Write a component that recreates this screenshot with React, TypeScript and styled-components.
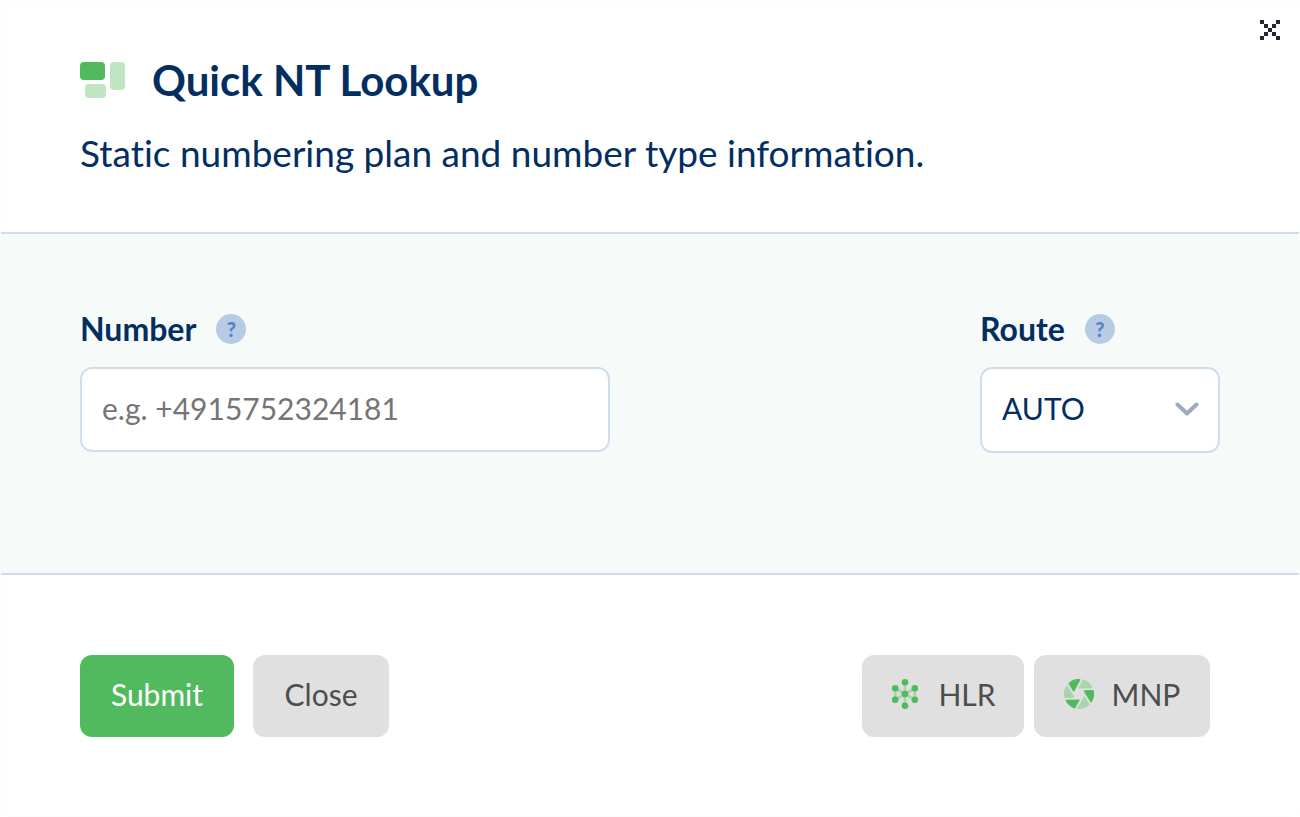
import React from "react";
import styled, { createGlobalStyle } from "styled-components";

const GlobalStyle = createGlobalStyle`
  *, *::before, *::after { box-sizing: border-box; }
  body {
    margin: 0;
    background: #ffffff;
    color: #032e61;
    font-family: Avenir, Lato, "Liberation Sans", sans-serif;
    font-variant-ligatures: none;
  }
  button, input, select { font: inherit; }
`;

const Dialog = styled.main`
  position: relative;
  display: flex;
  flex-direction: column;
  min-height: 100vh;
  background: #fff;
  border: 1px solid #fcfcfc;
  border-radius: 12px;
`;

const Dismiss = styled.button`
  position: absolute;
  top: 9px;
  right: 9px;
  display: flex;
  padding: 10px;
  border: 0;
  background: none;
  color: #222533;
  cursor: pointer;
`;

const Header = styled.header`
  padding: 54px 79px 54px;
`;

const TitleRow = styled.div`
  display: flex;
  align-items: center;
  gap: 26px;
`;

const Title = styled.h1`
  margin: 0;
  font-size: 42px;
  line-height: 50px;
  font-weight: 700;
`;

const Subtitle = styled.p`
  margin: 23px 0 0;
  font-size: 37px;
  line-height: 50px;
`;

const Fields = styled.section`
  display: grid;
  grid-template-columns: minmax(0, 530px) 240px;
  justify-content: space-between;
  align-items: start;
  gap: 20px;
  padding: 75px 79px 120px;
  background: #f6faf9;
  border: solid #cfdeef;
  border-width: 2px 0;
`;

const Field = styled.div`
  display: flex;
  flex-direction: column;
  gap: 18px;
`;

const LabelRow = styled.div`
  display: flex;
  align-items: center;
  gap: 20px;
  height: 40px;
`;

const Label = styled.label`
  font-size: 32px;
  line-height: 40px;
  font-weight: 700;
`;

const Help = styled.button`
  width: 30px;
  height: 30px;
  padding: 0;
  border: 0;
  border-radius: 50%;
  background: #b7cbe4;
  color: #5583c9;
  font-size: 20px;
  line-height: 30px;
  font-weight: 900;
  cursor: help;
`;

const TextBox = styled.input`
  width: 100%;
  height: 85px;
  padding: 0 20px 4px;
  border: 2px solid #cfdeef;
  border-radius: 12px;
  background: #fff;
  color: inherit;
  font-size: 30px;

  &::placeholder {
    color: #757575;
    opacity: 1;
  }
`;

const SelectFrame = styled.div`
  display: grid;
  grid-template-columns: 1fr 45px;
  align-items: center;

  svg {
    grid-area: 1 / 2;
    margin-bottom: 3px;
    pointer-events: none;
  }
`;

const Select = styled.select`
  grid-area: 1 / 1 / 2 / 3;
  height: 86px;
  padding: 0 50px 4px 20px;
  border: 2px solid #cfdeef;
  border-radius: 12px;
  background: #fff;
  color: inherit;
  font-size: 30px;
  appearance: none;
`;

const Footer = styled.footer`
  display: flex;
  flex-wrap: wrap;
  justify-content: space-between;
  gap: 20px;
  padding: 80px 89px 79px 79px;
`;

const ButtonGroup = styled.div<{ $gap: number }>`
  display: flex;
  gap: ${(p) => p.$gap}px;
`;

const Button = styled.button<{ $primary?: boolean; $width: number }>`
  display: flex;
  align-items: center;
  justify-content: center;
  gap: 18px;
  min-width: ${(p) => p.$width}px;
  height: 82px;
  padding: 0 20px 4px;
  border: 0;
  border-radius: 12px;
  background: ${(p) => (p.$primary ? "#52ba5e" : "#e0e0e0")};
  color: ${(p) => (p.$primary ? "#ffffff" : "#4d4d4d")};
  font-size: 30px;
  line-height: 40px;
  cursor: pointer;
`;

const BlocksIcon = () => (
  <svg width="46" height="36" viewBox="0 0 46 36" aria-hidden="true">
    <rect width="25" height="18" rx="4" fill="#52ba5e" />
    <rect x="30" width="15" height="28" rx="4" fill="#bfe5c1" />
    <rect x="5" y="22" width="21" height="14" rx="4" fill="#bfe5c1" />
  </svg>
);

const CloseIcon = () => (
  <svg width="20" height="20" viewBox="0 0 5 5" shapeRendering="crispEdges" aria-hidden="true">
    <path
      fill="currentColor"
      d="M0 0h1v1H0zM4 0h1v1H4zM1 1h1v1H1zM3 1h1v1H3zM2 2h1v1H2zM1 3h1v1H1zM3 3h1v1H3zM0 4h1v1H0zM4 4h1v1H4z"
    />
  </svg>
);

const Chevron = () => (
  <svg width="24" height="14" viewBox="0 0 24 14" fill="none" aria-hidden="true">
    <path d="M2.5 2.5 12 11.5 21.5 2.5" stroke="#9caac2" strokeWidth="4" strokeLinecap="round" strokeLinejoin="round" />
  </svg>
);

const nodes = [[15, 3.3], [24.8, 9.3], [24.8, 20.7], [15, 26.7], [5.2, 20.7], [5.2, 9.3]];

const NetworkIcon = () => (
  <svg width="30" height="30" viewBox="0 0 30 30" aria-hidden="true">
    <path
      d="M15 3.3V26.7M5.2 9.3 24.8 20.7M24.8 9.3 5.2 20.7M5.2 9.3V20.7M24.8 9.3V20.7"
      stroke="#a9d4ae"
      strokeWidth="2.8"
    />
    {nodes.map(([x, y]) => (
      <circle key={`${x}-${y}`} cx={x} cy={y} r="3.3" fill="#52ba5e" />
    ))}
    <circle cx="15" cy="15" r="3.3" fill="#52ba5e" />
  </svg>
);

const ApertureIcon = () => (
  <svg width="30" height="30" viewBox="0 0 30 30" aria-hidden="true">
    {[0, 60, 120, 180, 240, 300].map((angle, i) => {
      const color = i % 2 ? "#a9d4ae" : "#52ba5e";
      return (
        <path
          key={angle}
          d="M5.2 4.4A14.4 14.4 0 0 1 15.7 .7L9.7 11.8Z"
          transform={`rotate(${angle} 15 15)`}
          fill={color}
          stroke={color}
          strokeWidth="1.4"
          strokeLinejoin="round"
        />
      );
    })}
  </svg>
);

export default function App() {
  return (
    <>
      <GlobalStyle />
      <Dialog>
        <Dismiss type="button" aria-label="Dismiss">
          <CloseIcon />
        </Dismiss>
        <Header>
          <TitleRow>
            <BlocksIcon />
            <Title>Quick NT Lookup</Title>
          </TitleRow>
          <Subtitle>Static numbering plan and number type information.</Subtitle>
        </Header>
        <Fields>
          <Field>
            <LabelRow>
              <Label htmlFor="number">Number</Label>
              <Help type="button">?</Help>
            </LabelRow>
            <TextBox id="number" type="tel" placeholder="e.g. +4915752324181" />
          </Field>
          <Field>
            <LabelRow>
              <Label htmlFor="route">Route</Label>
              <Help type="button">?</Help>
            </LabelRow>
            <SelectFrame>
              <Select id="route" defaultValue="AUTO">
                <option>AUTO</option>
              </Select>
              <Chevron />
            </SelectFrame>
          </Field>
        </Fields>
        <Footer>
          <ButtonGroup $gap={19}>
            <Button type="submit" $primary $width={154}>Submit</Button>
            <Button type="button" $width={136}>Close</Button>
          </ButtonGroup>
          <ButtonGroup $gap={10}>
            <Button type="button" $width={162}>
              <NetworkIcon />
              HLR
            </Button>
            <Button type="button" $width={176}>
              <ApertureIcon />
              MNP
            </Button>
          </ButtonGroup>
        </Footer>
      </Dialog>
    </>
  );
}
